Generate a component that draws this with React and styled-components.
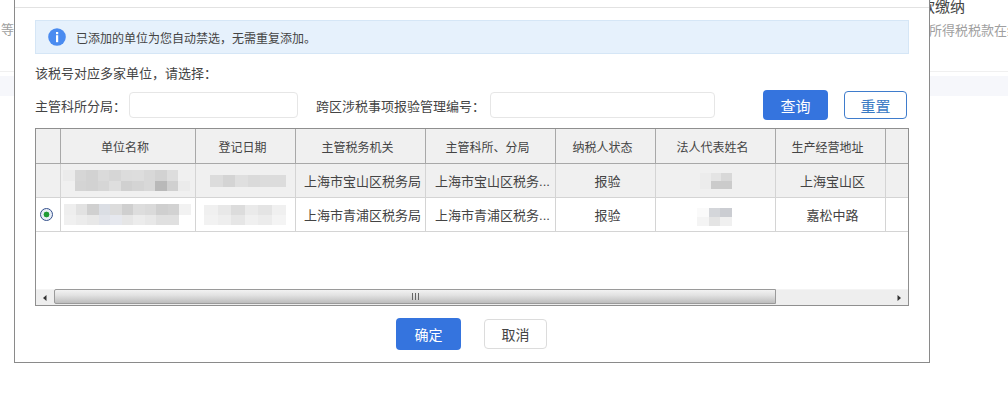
import React from "react";
import styled, { createGlobalStyle } from "styled-components";

const Global = createGlobalStyle`
  html, body { margin: 0; padding: 0; background: #fff; }
  body { font-family: "Liberation Sans", "Noto Sans CJK SC", sans-serif; }
`;

const Page = styled.div`
  position: relative;
  width: 1008px;
  height: 404px;
  overflow: hidden;
  background: #fff;
`;

const Backdrop = styled.div`
  height: 71px;
  border-bottom: 1px solid #f0f0f0;
  display: flex;
  justify-content: space-between;
`;
const BackLeft = styled.div`
  padding: 22px 0 0 1px;
  font-size: 13px;
  line-height: 16px;
  color: #a0a0a0;
`;
const BackRight = styled.div`
  width: 88px;
  overflow: hidden;
  white-space: nowrap;
`;
const BackTitle = styled.div`
  margin-top: -1px;
  font-size: 15px;
  line-height: 16px;
  color: #444;
`;
const BackText = styled.div`
  margin: 8px 0 0 9px;
  font-size: 13px;
  line-height: 16px;
  color: #a0a0a0;
`;
const BackBand = styled.div`
  margin-top: 4px;
  height: 20px;
  background: #f6f7fb;
`;

const Dialog = styled.div`
  position: absolute;
  left: 14px;
  top: 0;
  width: 916px;
  height: 363px;
  box-sizing: border-box;
  background: #fff;
  border: 1px solid #8a8a8a;
  border-top: 0;
`;
const DialogHead = styled.div`
  height: 7px;
  border-bottom: 1px solid #e2e2e2;
`;
const DialogBody = styled.div`
  padding: 12px 20px 0;
`;
const Alert = styled.div`
  box-sizing: border-box;
  width: 874px;
  height: 34px;
  display: flex;
  align-items: center;
  gap: 10px;
  padding-left: 12px;
  background: #e6f1fc;
  border: 1px solid #d5e6f6;
  font-size: 12px;
  color: #444;
`;
const Prompt = styled.div`
  margin-top: 10px;
  height: 20px;
  line-height: 20px;
  font-size: 13px;
  color: #444;
`;
const FormRow = styled.div`
  margin-top: 6px;
  height: 30px;
  display: flex;
  align-items: center;
`;
const Label = styled.label`
  flex: none;
  width: ${p => p.$w}px;
  margin-left: ${p => p.$ml || 0}px;
  font-size: 13px;
  color: #444;
  white-space: nowrap;
`;
const Input = styled.input`
  flex: none;
  box-sizing: border-box;
  width: ${p => p.$w}px;
  height: 26px;
  border: 1px solid #e6e6e6;
  border-radius: 4px;
  background: #fff;
  outline: none;
`;
const Primary = styled.button`
  flex: none;
  box-sizing: border-box;
  width: 65px;
  height: ${p => p.$h}px;
  margin-left: ${p => p.$ml || 0}px;
  border: 0;
  border-radius: 4px;
  background: #3574de;
  color: #fff;
  font: inherit;
  font-size: ${p => p.$fs}px;
  padding: 0;
`;
const Outline = styled.button`
  flex: none;
  box-sizing: border-box;
  width: 63px;
  height: ${p => p.$h}px;
  margin-left: ${p => p.$ml || 0}px;
  border: 1px solid ${p => (p.$plain ? "#dcdcdc" : "#3f7ccc")};
  border-radius: 4px;
  background: #fff;
  color: ${p => (p.$plain ? "#444" : "#3a7ac4")};
  font: inherit;
  font-size: ${p => p.$fs}px;
  padding: 0;
`;

const Grid = styled.div`
  box-sizing: border-box;
  margin-top: 8px;
  width: 874px;
  height: 178px;
  border: 1px solid #8f8f8f;
  display: flex;
  flex-direction: column;
`;
const GridBody = styled.div`
  flex: 1;
  overflow: hidden;
`;
const Table = styled.table`
  table-layout: fixed;
  border-collapse: separate;
  border-spacing: 0;
  width: 872px;
`;
const Th = styled.th`
  box-sizing: border-box;
  height: 35px;
  padding: 0 6px 0 0;
  font-weight: 400;
  font-size: 12px;
  color: #444;
  background: #f0f0f0;
  border-right: 1px solid #a8a8a8;
  border-bottom: 1px solid #a8a8a8;
  &:last-child { border-right: 0; }
`;
const Td = styled.td`
  box-sizing: border-box;
  height: 34px;
  padding: 0;
  font-size: 13px;
  color: #444;
  text-align: center;
  white-space: nowrap;
  overflow: hidden;
  background: ${p => (p.$alt ? "#f0f0f0" : "#fff")};
  border-right: 1px solid #d4d4d4;
  border-bottom: 1px solid #d4d4d4;
  &:last-child { border-right: 0; }
`;
const TextTd = styled(Td)`
  padding-left: 4px;
`;
const Radio = styled.span`
  display: block;
  box-sizing: border-box;
  width: 13px;
  height: 13px;
  margin-left: 4px;
  border-radius: 50%;
  border: 1px solid #34508c;
  background: radial-gradient(circle, #1f9a35 0 2.6px, #e8eef6 3.2px);
`;

const Mosaic = styled.div`
  display: grid;
  grid-template-columns: repeat(${p => p.$cols}, ${p => p.$size}px);
  grid-auto-rows: ${p => p.$rowH}px;
  width: max-content;
  margin: ${p => p.$mt || 0}px 0 0 ${p => p.$ml}px;
  filter: blur(0.7px);
`;
const Tile = styled.i`
  display: block;
  background: ${p => p.$c};
`;

const Scrollbar = styled.div`
  flex: none;
  height: 15px;
  display: flex;
  background: #eee;
  border-top: 1px solid #f4f4f4;
`;
const Arrow = styled.div`
  flex: none;
  width: ${p => p.$w}px;
  display: flex;
  align-items: center;
  justify-content: center;
`;
const Track = styled.div`
  flex: 1;
`;
const Thumb = styled.div`
  box-sizing: border-box;
  width: 722px;
  height: 15px;
  margin-top: -1px;
  display: flex;
  align-items: center;
  justify-content: center;
  border: 1px solid #9a9a9a;
  border-radius: 2px 0 0 2px;
  background: linear-gradient(#f2f2f2 0%, #e2e2e2 40%, #bdbdbd 100%);
`;
const Footer = styled.div`
  margin-top: 12px;
  display: flex;
  align-items: center;
  padding-left: 361px;
`;

const InfoIcon = () => (
  <svg width="18" height="18" viewBox="0 0 18 18" aria-hidden="true">
    <circle cx="9" cy="9" r="8.8" fill="#4a8bf0" />
    <rect x="8" y="4" width="2.2" height="2.2" fill="#fff" />
    <rect x="8" y="7.2" width="2.2" height="7" fill="#fff" />
  </svg>
);
const LeftTri = () => (
  <svg width="4" height="6" viewBox="0 0 4 6"><path d="M3.5 0v6L0 3z" fill="#333" /></svg>
);
const RightTri = () => (
  <svg width="4" height="6" viewBox="0 0 4 6"><path d="M.5 0v6L4 3z" fill="#333" /></svg>
);
const GripIcon = () => (
  <svg width="7" height="7" viewBox="0 0 7 7" aria-hidden="true">
    <path d="M.5 0v7M3.5 0v7M6.5 0v7" stroke="#666" strokeWidth="1" />
  </svg>
);

const Blur = ({ ml, mt, size, rowH, rows }) => (
  <Mosaic $cols={rows[0].length} $size={size} $rowH={rowH} $ml={ml} $mt={mt}>
    {rows.flat().map((c, i) => <Tile key={i} $c={c} />)}
  </Mosaic>
);

const COMMA = "\uFF0C";
const COLON = "\uFF1A";

const columns = ["", "单位名称", "登记日期", "主管税务机关", "主管科所、分局", "纳税人状态", "法人代表姓名", "生产经营地址", ""];
const widths = [25, 135, 100, 130, 130, 100, 120, 110, 22];

const W = "transparent";
const rows = [
  {
    alt: true, radio: false, auth: "上海市宝山区税务局", sub: "上海市宝山区税务...", addr: "上海宝山区",
    name: { ml: 2, size: 11.5, rowH: 10.5, rows: [
      ["#ebebeb", "#d6d6d6", "#d2d2d2", "#dadada", "#d6d6d6", "#dcdcdc", "#dddddd", "#d8d8d8", "#d2d2d2", "#dddddd", W],
      [W, "#d4d4d4", "#d2d2d2", "#d6d6d6", "#dedede", "#d0d0d0", "#d4d4d4", "#d8d8d8", "#b9b9b9", "#d0d0d0", "#ebebeb"],
    ] },
    date: { ml: 14, size: 12.6, rowH: 12, rows: [["#dcdcdc", "#d4d4d4", "#dfdfdf", "#dadada", "#dcdcdc", "#dcdcdc"]] },
    rep: { ml: 44, size: 10.6, rowH: 8, rows: [["#ececec", "#e4e4e4", "#d8d8d8"], ["#ececec", "#cbcbcb", "#cbcbcb"]] },
  },
  {
    alt: false, radio: true, auth: "上海市青浦区税务局", sub: "上海市青浦区税务...", addr: "嘉松中路",
    name: { ml: 3, size: 11.5, rowH: 10.5, rows: [
      ["#eeeeee", "#e2e2e2", "#d0d0d0", "#dbdee4", "#dcdcdc", "#cfcfcf", "#dddddd", "#dadada", "#cfcfcf", "#d2d2d2", "#f2f2f2"],
      ["#f0f0f0", "#ececec", "#e8e8e8", "#e2e4ea", "#e6e8ee", "#e6e6e6", "#ececec", "#e8e8e8", "#e0e0e0", "#e0e0e0", W],
    ] },
    date: { ml: 8, size: 13.6, rowH: 10, rows: [
      ["#f0f0f0", "#e8e8e8", "#dcdcdc", "#eaeaea", "#e4e4e4", "#f0f0f0"],
      ["#f2f2f2", "#eeeeee", "#e6e6e6", "#f0f0f0", "#ececec", "#f4f4f4"],
    ] },
    rep: { ml: 41, mt: 5, size: 11.6, rowH: 9, rows: [["#fafafa", "#d4d6da", "#cbcdd2"], ["#f4f4f4", "#e4e4e4", "#f0f0f0"]] },
  },
];

export default function App() {
  return (
    <Page>
      <Global />
      <Backdrop>
        <BackLeft>等</BackLeft>
        <BackRight>
          <BackTitle>款缴纳</BackTitle>
          <BackText>所得税税款在缴</BackText>
        </BackRight>
      </Backdrop>
      <BackBand />
      <Dialog>
        <DialogHead />
        <DialogBody>
          <Alert>
            <InfoIcon />
            {`已添加的单位为您自动禁选${COMMA}无需重复添加。`}
          </Alert>
          <Prompt>{`该税号对应多家单位${COMMA}请选择${COLON}`}</Prompt>
          <FormRow>
            <Label $w={94}>{`主管科所分局${COLON}`}</Label>
            <Input $w={169} />
            <Label $w={174} $ml={18}>{`跨区涉税事项报验管理编号${COLON}`}</Label>
            <Input $w={225} />
            <Primary $h={30} $ml={48} $fs={15}>查询</Primary>
            <Outline $h={28} $ml={16} $fs={15}>重置</Outline>
          </FormRow>
          <Grid>
            <GridBody>
              <Table>
                <colgroup>
                  {widths.map((w, i) => <col key={i} width={w} />)}
                </colgroup>
                <thead>
                  <tr>{columns.map((c, i) => <Th key={i}>{c}</Th>)}</tr>
                </thead>
                <tbody>
                  {rows.map((r, i) => (
                    <tr key={i}>
                      <Td $alt={r.alt}>{r.radio && <Radio />}</Td>
                      <Td $alt={r.alt}><Blur {...r.name} /></Td>
                      <Td $alt={r.alt}><Blur {...r.date} /></Td>
                      <TextTd $alt={r.alt}>{r.auth}</TextTd>
                      <TextTd $alt={r.alt}>{r.sub}</TextTd>
                      <TextTd $alt={r.alt}>报验</TextTd>
                      <Td $alt={r.alt}><Blur {...r.rep} /></Td>
                      <TextTd $alt={r.alt}>{r.addr}</TextTd>
                      <Td $alt={r.alt} />
                    </tr>
                  ))}
                </tbody>
              </Table>
            </GridBody>
            <Scrollbar>
              <Arrow $w={18}><LeftTri /></Arrow>
              <Thumb><GripIcon /></Thumb>
              <Track />
              <Arrow $w={18}><RightTri /></Arrow>
            </Scrollbar>
          </Grid>
          <Footer>
            <Primary $h={32} $fs={14}>确定</Primary>
            <Outline $h={30} $ml={23} $fs={14} $plain>取消</Outline>
          </Footer>
        </DialogBody>
      </Dialog>
    </Page>
  );
}
